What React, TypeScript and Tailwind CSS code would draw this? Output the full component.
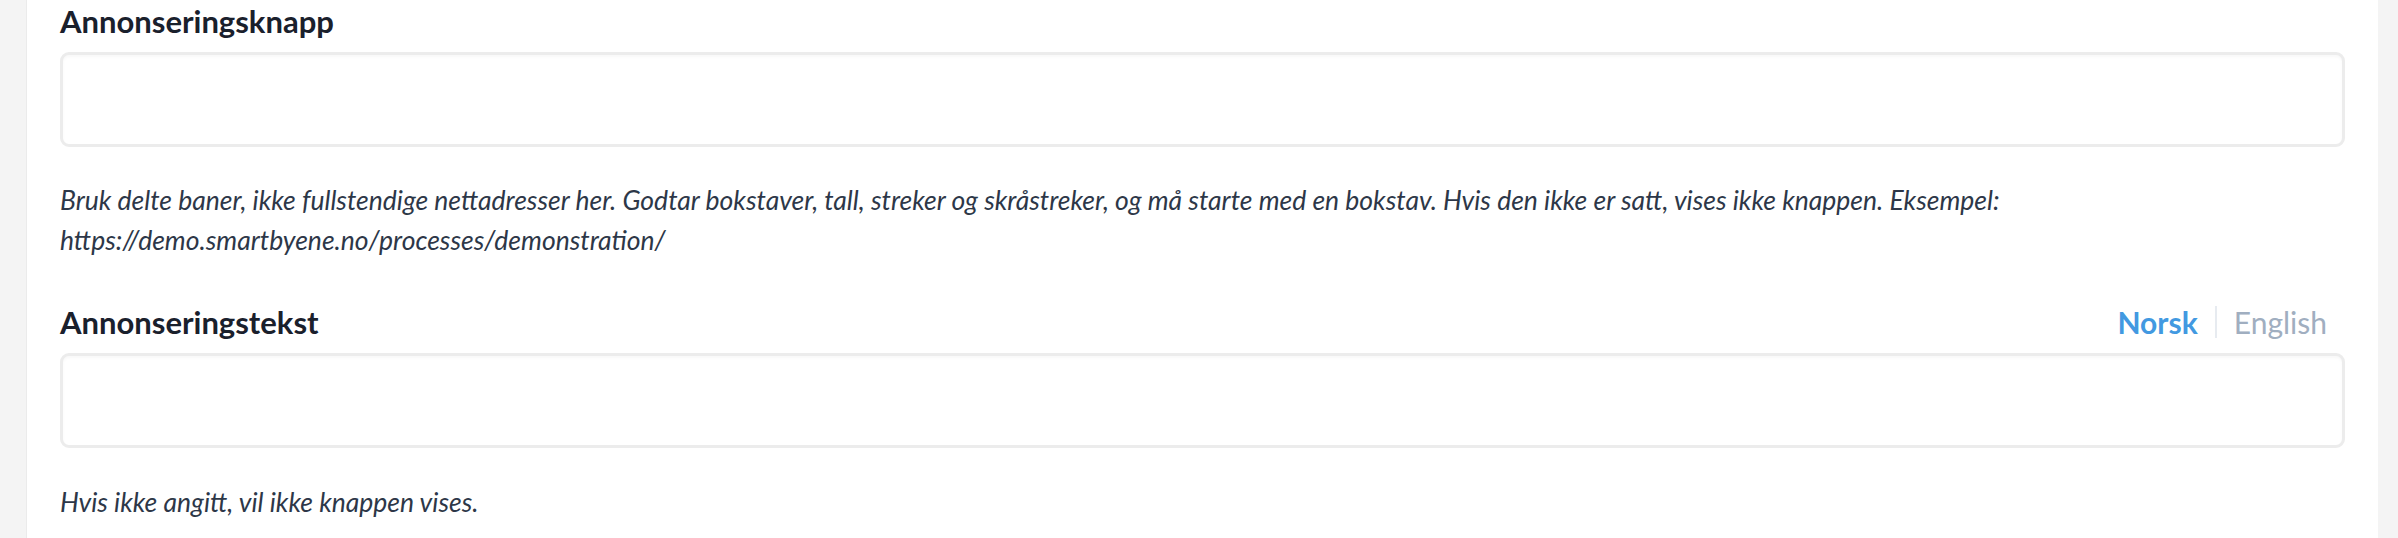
import React from "react";

function Field() {
  return (
    <input
      type="text"
      className="block w-full h-[95px] rounded-[9px] border-[3px] border-[#ececec] bg-white shadow-[inset_0_2px_3px_rgba(0,0,0,0.03)] outline-none"
    />
  );
}

export default function App() {
  return (
    <div
      className="flex h-[538px] bg-[#f4f4f4] text-[#1a202c]"
      style={{ fontFamily: "Lato, 'Liberation Sans', sans-serif" }}
    >
      <div className="ml-[26px] mr-[20px] flex-1 overflow-hidden border-l border-[#ebebeb] bg-white px-[33px]">
        <label className="mt-[1px] block text-[31px] font-bold leading-[40px]">
          Annonseringsknapp
        </label>
        <div className="mt-[11px]">
          <Field />
        </div>
        <p className="mt-[33px] text-[26.5px] italic leading-[40px] text-[#2d3748]">
          Bruk delte baner, ikke fullstendige nettadresser her. Godtar bokstaver, tall, streker og skråstreker, og må starte med en bokstav. Hvis den ikke er satt, vises ikke knappen. Eksempel: https://demo.smartbyene.no/processes/demonstration/
        </p>

        <div className="mt-[42px] flex items-center justify-between pr-[18px]">
          <label className="text-[31px] font-bold leading-[40px]">
            Annonseringstekst
          </label>
          <div className="flex items-center text-[30px] leading-[40px]">
            <button className="font-bold text-[#4299e1]">Norsk</button>
            <span className="mx-[17px] h-[32px] w-[2px] bg-[#e7ebf0]" />
            <button className="text-[#a0aec0]">English</button>
          </div>
        </div>
        <div className="mt-[11px]">
          <Field />
        </div>
        <p className="mt-[34px] text-[26.5px] italic leading-[40px] text-[#2d3748]">
          Hvis ikke angitt, vil ikke knappen vises.
        </p>
      </div>
    </div>
  );
}
